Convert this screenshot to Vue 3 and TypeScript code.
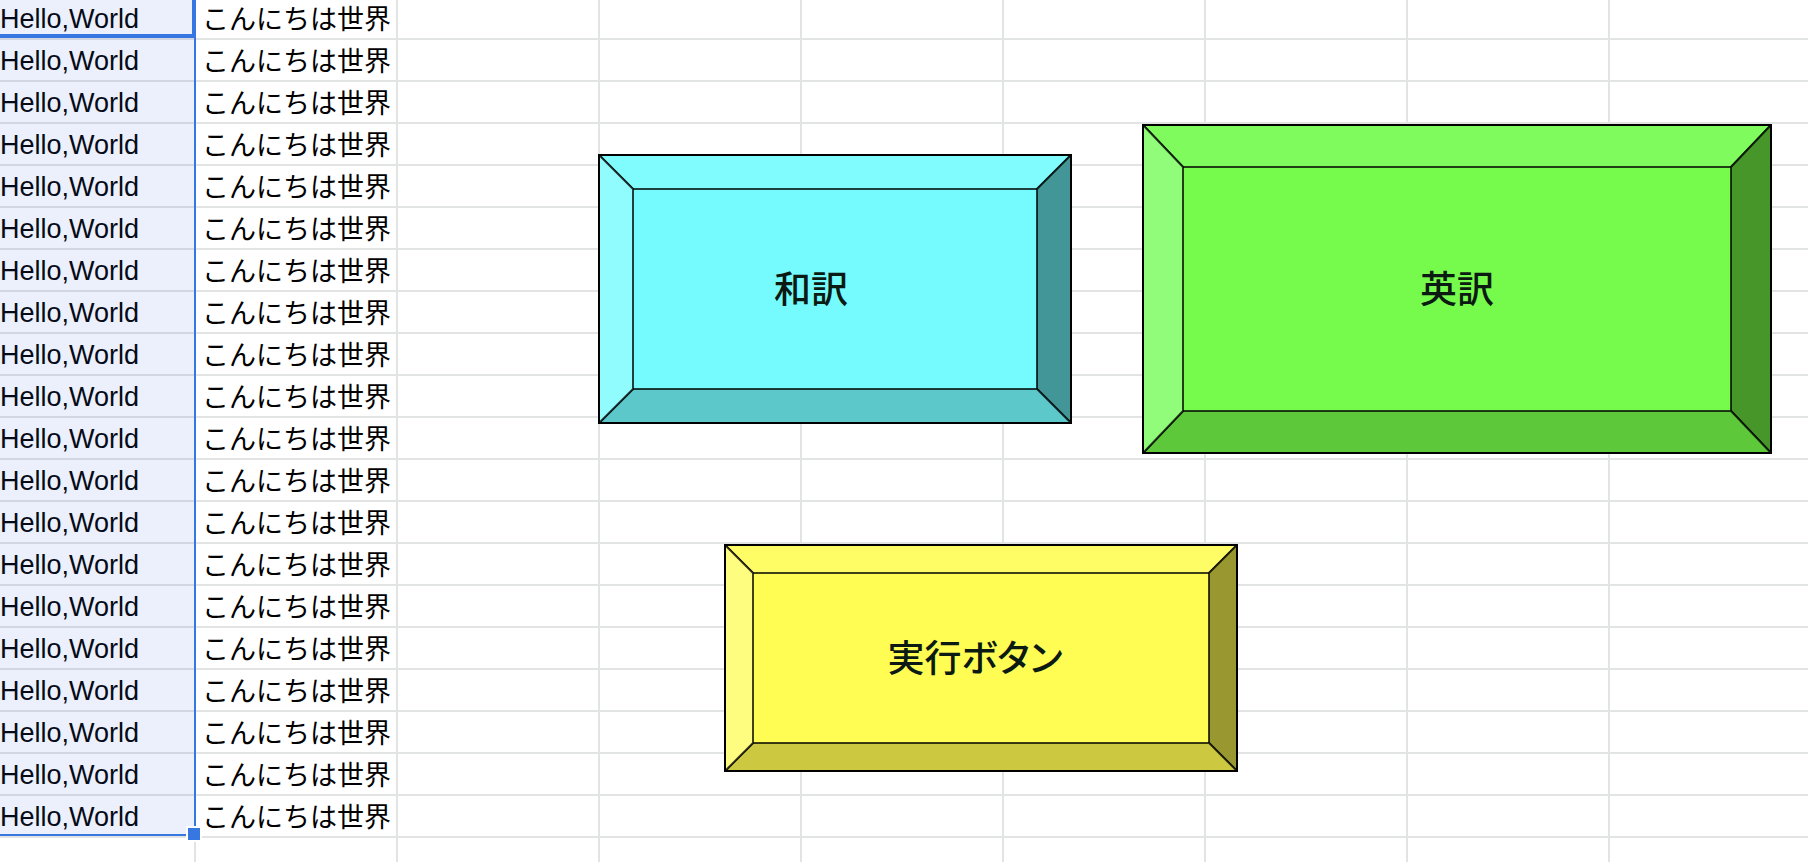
<script setup lang="ts">
interface Bevel {
  id: string
  label: string
  width: number
  height: number
  insetX: number
  insetY: number
}

const rows: { source: string; translated: string }[] = Array.from({ length: 20 }, () => ({
  source: 'Hello,World',
  translated: 'こんにちは世界',
}))

const emptyColumns = 7

const buttons: Bevel[] = [
  { id: 'japanese', label: '和訳', width: 474, height: 270, insetX: 35, insetY: 35 },
  { id: 'english', label: '英訳', width: 630, height: 330, insetX: 41, insetY: 43 },
  { id: 'run', label: '実行ボタン', width: 514, height: 228, insetX: 29, insetY: 29 },
]

function points(list: number[][]): string {
  return list.map((p) => p.join(',')).join(' ')
}

function faces(b: Bevel) {
  const { width: w, height: h, insetX: x, insetY: y } = b
  return [
    { side: 'top', points: points([[1, 1], [w - 1, 1], [w - x, y], [x, y]]) },
    { side: 'right', points: points([[w - 1, 1], [w - 1, h - 1], [w - x, h - y], [w - x, y]]) },
    { side: 'bottom', points: points([[1, h - 1], [x, h - y], [w - x, h - y], [w - 1, h - 1]]) },
    { side: 'left', points: points([[1, 1], [x, y], [x, h - y], [1, h - 1]]) },
  ]
}
</script>

<template>
  <main class="sheet">
    <table class="grid">
      <colgroup>
        <col class="col-first" />
        <col v-for="n in emptyColumns" :key="n" class="col" />
        <col />
      </colgroup>
      <tbody>
        <tr v-for="(row, i) in rows" :key="i">
          <td class="source">{{ row.source }}</td>
          <td class="translated">{{ row.translated }}</td>
          <td v-for="n in emptyColumns" :key="n"></td>
        </tr>
        <tr>
          <td v-for="n in emptyColumns + 2" :key="n"></td>
        </tr>
      </tbody>
    </table>

    <div class="selection"></div>
    <div class="active-cell"></div>
    <div class="fill-handle"></div>

    <button v-for="b in buttons" :key="b.id" type="button" class="bevel" :class="b.id">
      <svg class="shape" :viewBox="`0 0 ${b.width} ${b.height}`" aria-hidden="true">
        <rect class="face" x="1" y="1" :width="b.width - 2" :height="b.height - 2" />
        <polygon v-for="f in faces(b)" :key="f.side" :class="f.side" :points="f.points" />
        <rect class="outline" x="1" y="1" :width="b.width - 2" :height="b.height - 2" />
      </svg>
      <span class="label">{{ b.label }}</span>
    </button>
  </main>
</template>

<style>
body {
  margin: 0;
  background: #fff;
}
</style>

<style scoped>
.sheet {
  position: relative;
  height: 100vh;
  overflow: hidden;
  background: #fff;
  color: #000;
  font-family: "Liberation Sans", "Noto Sans CJK JP", sans-serif;
}

.grid {
  width: 100%;
  table-layout: fixed;
  border-collapse: separate;
  border-spacing: 0;
}

.col-first {
  width: 196px;
}

.col {
  width: 202px;
}

td {
  box-sizing: border-box;
  height: 42px;
  padding: 0 0 1px;
  border: solid #e2e3e3;
  border-width: 0 2px 2px 0;
  font-size: 27px;
  line-height: 36px;
  white-space: nowrap;
  vertical-align: bottom;
}

td:last-child {
  border-right: 0;
}

tr:first-child td {
  height: 40px;
}

td.translated {
  padding: 0 0 3px 6px;
  font-family: "Noto Sans CJK JP", sans-serif;
  line-height: 35px;
}

.selection,
.active-cell,
.fill-handle {
  position: absolute;
  box-sizing: border-box;
  pointer-events: none;
}

.selection {
  top: -2px;
  left: -2px;
  width: 198px;
  height: 838px;
  border: 2px solid #3777e2;
  background: rgba(55, 105, 226, 0.1);
}

.active-cell {
  top: -4px;
  left: -4px;
  width: 200px;
  height: 42px;
  border: 4px solid #3777e2;
}

.fill-handle {
  top: 826px;
  left: 186px;
  width: 16px;
  height: 16px;
  border: 2px solid #fff;
  background: #3777e2;
}

.bevel {
  position: absolute;
  display: flex;
  align-items: center;
  justify-content: center;
  padding: 0 0 4px;
  border: 0;
  background: none;
  color: #0b1a12;
  font-family: "Noto Sans CJK JP", sans-serif;
  font-size: 37px;
  font-weight: 500;
  font-feature-settings: "palt";
  line-height: 48px;
  cursor: pointer;
}

.shape {
  position: absolute;
  inset: 0;
  width: 100%;
  height: 100%;
}

.shape polygon {
  stroke: rgba(0, 0, 0, 0.75);
  stroke-width: 2;
  stroke-linejoin: round;
}

.outline {
  fill: none;
  stroke: #000;
  stroke-width: 2;
}

.label {
  position: relative;
}

.japanese {
  top: 154px;
  left: 598px;
  width: 474px;
  height: 270px;
  padding-right: 48px;
}

.japanese .face { fill: #75fbfd; }
.japanese .top { fill: #80fcfe; }
.japanese .left { fill: #91fcfe; }
.japanese .right { fill: #439698; }
.japanese .bottom { fill: #5cc8ca; }

.english {
  top: 124px;
  left: 1142px;
  width: 630px;
  height: 330px;
}

.english .face { fill: #76fb4c; }
.english .top { fill: #80fb5e; }
.english .left { fill: #91fb7a; }
.english .right { fill: #469629; }
.english .bottom { fill: #5ec83b; }

.run {
  top: 544px;
  left: 724px;
  width: 514px;
  height: 228px;
  padding-right: 12px;
}

.run .face { fill: #fffd54; }
.run .top { fill: #fffd65; }
.run .left { fill: #fffd7f; }
.run .right { fill: #99972f; }
.run .bottom { fill: #ccc941; }
</style>
